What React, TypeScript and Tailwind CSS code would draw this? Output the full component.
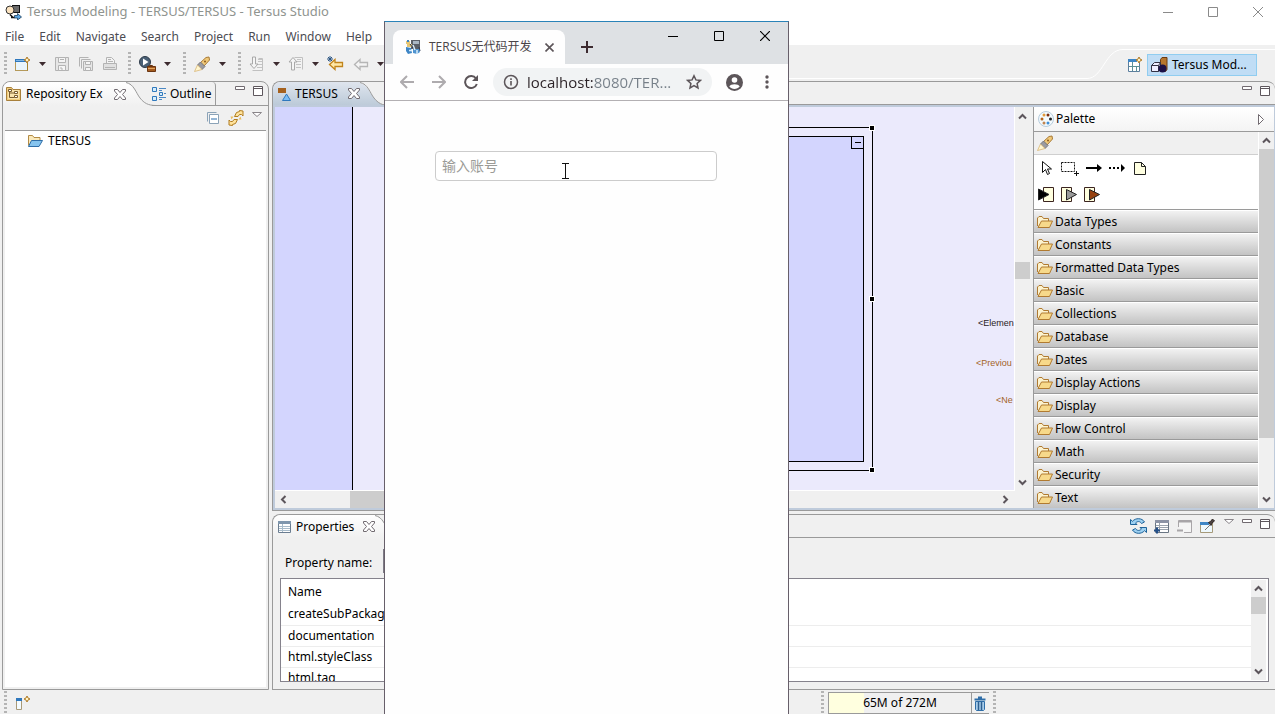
import React from 'react';
import clsx from 'clsx';

type IconProps = { className?: string };

const Svg: React.FC<{ w?: number; h?: number; className?: string; children: React.ReactNode }> = ({
  w = 16,
  h = 16,
  className,
  children,
}) => (
  <svg width={w} height={h} viewBox={`0 0 ${w} ${h}`} fill="none" aria-hidden="true" className={clsx('shrink-0', className)}>
    {children}
  </svg>
);

const AppIcon = () => (
  <Svg w={17}>
    <rect x="7.500" y="1.500" width="7" height="7" fill="#6b6b6b" stroke="#111" />
    <circle cx="5" cy="6" r="4" fill="#fbe3c0" stroke="#333" />
    <path d="M5 10.500l3 3h2M6 13.500h3" stroke="#111" strokeWidth="1.500" />
    <path d="M9.500 11.500h3v-2l4 3.500-4 3v-2h-3z" fill="#5aa5e2" stroke="#1c3d5c" strokeWidth=".8" />
  </Svg>
);

const Caret = () => (
  <Svg w={7} h={4}>
    <path d="M0 0h7L3.500 4z" fill="#3d2b30" />
  </Svg>
);

const Sparkle = ({ x = 11, y = 0 }: { x?: number; y?: number }) => (
  <path
    transform={`translate(${x} ${y})`}
    d="M3 0l1 2 2 1-2 1-1 2-1-2-2-1 2-1z"
    fill="#fff3c4"
    stroke="#b07a24"
    strokeWidth="1"
  />
);

const NewIcon = () => (
  <Svg>
    <rect x=".5" y="3.500" width="12" height="11" fill="#e9f5fc" stroke="#b59a5b" />
    <path d="M0 3h11v3H0z" fill="#2f78bd" />
    <path d="M1 4h9v1H1z" fill="#7fb6e4" />
    <path d="M12.500 7v7.500" stroke="#a8842d" />
    <Sparkle x={9} y={1} />
  </Svg>
);

const SaveIcon = () => (
  <Svg>
    <path d="M1.500 1.500h13v13h-13z" fill="#e6e6e6" stroke="#b3b3b3" />
    <path d="M4.500 1.500h7v5h-7zM4.500 9.500h7v5h-7z" fill="#f5f5f5" stroke="#b3b3b3" />
    <path d="M6 3.500h4M6 12h2v2" stroke="#b3b3b3" />
  </Svg>
);

const SaveAllIcon = () => (
  <Svg>
    <path d="M1.500 10.500v-9h9M3.500 12.500v-9h9" stroke="#b3b3b3" />
    <path d="M5.500 5.500h9v9h-9z" fill="#e6e6e6" stroke="#b3b3b3" />
    <path d="M7.500 5.500h5v3h-5zM7.500 11.500h5v3h-5z" fill="#f5f5f5" stroke="#b3b3b3" />
  </Svg>
);

const PrintIcon = () => (
  <Svg>
    <path d="M4.500 7.500v-6h5l3 3v3" fill="#f3f3f3" stroke="#b3b3b3" />
    <path d="M1.500 7.500h13v6h-13z" fill="#e0e0e0" stroke="#b3b3b3" />
    <path d="M6 3.500h3M6 5.500h5M3 11.500h10" stroke="#b3b3b3" />
  </Svg>
);

const RunIcon = () => (
  <Svg w={17}>
    <circle cx="6" cy="6" r="5.500" fill="#4a6076" stroke="#2c3a48" />
    <path d="M4 2.500l5.500 3.500L4 9.500z" fill="#fff" />
    <path d="M10.500 10.500v-1h3v1" stroke="#6b3511" />
    <path d="M8.500 10.500h8v5h-8z" fill="#a35a1d" stroke="#6b3511" />
    <path d="M9 12.500h7" stroke="#e3a45c" />
  </Svg>
);

const TorchIcon = () => (
  <Svg w={17}>
    <path d="M6 7l6-5.500 3-.5.500 3-5.500 6z" fill="#f0c878" stroke="#a97a35" />
    <path d="M3.500 9l3-3 4.500 4.500-3 3z" fill="#9a9aa0" stroke="#77777d" />
    <path d="M3.500 9l4.500 4.500L.5 15.500z" fill="#fff6d0" stroke="#d8b575" strokeWidth=".8" />
    <circle cx="11" cy="5.500" r="1" fill="#8a5a1c" />
  </Svg>
);

const StepIcon = ({ up }: { up?: boolean }) => (
  <Svg>
    <path d={up ? 'M6.500 1.500h8v12' : 'M3.500 14.500h10v-12h-4'} fill="#f3f3f3" stroke="#c0c0c0" />
    <path d="M8 11.500h5M8 8.500h5M9 5.500h4M9 3.500h4" stroke="#c4c4c4" />
    {up ? (
      <path d="M5 1.500l4 4.500H6.500v8h-3V6H1z" fill="#f5f5f5" stroke="#a9a9a9" />
    ) : (
      <path d="M5 12.500L1 8h2.500V1h3v7H9z" fill="#f5f5f5" stroke="#a9a9a9" />
    )}
  </Svg>
);

const BackIcon = ({ star }: { star?: boolean }) => (
  <Svg w={17}>
    <path
      d="M2.500 8.500l5.500-5v3h7.500v4H8v3z"
      fill={star ? '#ffe8a8' : '#f4f4f4'}
      stroke={star ? '#c1841c' : '#b5b5b5'}
      strokeWidth="1.300"
    />
    {star && <path d="M3 0v6M0 3h6M1 1l4 4M5 1L1 5" stroke="#2d5683" />}
  </Svg>
);

const OpenPerspectiveIcon = () => (
  <Svg>
    <path d="M1.500 2.500h11v12h-11z" fill="#fff" stroke="#5c7f9e" />
    <path d="M1 2h9v3H1z" fill="#3e86c6" />
    <path d="M5.500 5v9M2 9.500h11M9.500 9.500v5" stroke="#5c9096" />
    <Sparkle x={9} y={0} />
  </Svg>
);

const PerspectiveIcon = () => (
  <Svg w={17}>
    <path d="M9.500 2.500l1.500-2h5v12l-1.500 2h-5z" fill="#b5762e" stroke="#6a3b12" />
    <path d="M.5 8.500l3-3h6v6l-2 3h-7z" fill="#eef" stroke="#334" />
    <path d="M.5 8.500h7v6M7.500 8.500l2-3" stroke="#334" />
    <circle cx="11.500" cy="11.500" r="4" fill="#1c1147" />
  </Svg>
);

const RepositoryIcon = () => (
  <Svg>
    <path d="M.5 14.500v-13h5l1.500 2h7.500v11z" fill="#f2cd7c" stroke="#a8803c" />
    <path d="M2 4h11v9H2z" fill="#f9e3ad" />
    <path d="M3.500 4v7.500h5M3.500 7h5" stroke="#7a5c2e" />
    <path d="M2.500 3.500h3v2h-3zM8.500 5.500h3v2h-3zM8.500 9.500h3v2h-3z" fill="#fff" stroke="#7a5c2e" />
  </Svg>
);

const OutlineIcon = () => (
  <Svg w={14}>
    <path d="M.5 1.500h4v4h-4zM.5 10.500h4v4h-4zM7.500 6.500h3v3h-3z" fill="#d5edfb" stroke="#2f78bd" />
    <path d="M7 2.500h7M7 4.500h3M12 7.500h2M7 11.500h7M7 13.500h3" stroke="#4a88c4" />
  </Svg>
);

const CloseIcon = () => (
  <Svg w={12} h={11}>
    <path
      d="M.5.500h3L6 3.500 8.500.5h3v1.500L8.500 5.500l3 3.500v1.500h-3L6 7.500l-2.500 3h-3V9l3-3.500-3-3.500z"
      fill="#fff"
      stroke="#716a70"
    />
  </Svg>
);

const MinimizeIcon = () => (
  <Svg w={10} h={4}>
    <path d="M.5.500h9v3h-9z" fill="#fff" stroke="#716a70" />
  </Svg>
);

const MaximizeIcon = () => (
  <Svg w={10} h={10}>
    <path d="M.5.500h9v9h-9zM0 2.500h10" fill="#fff" stroke="#5e575d" />
  </Svg>
);

const ViewMenuIcon = () => (
  <Svg w={10} h={5}>
    <path d="M.5.500h9L5 4.500z" fill="#fff" stroke="#8a858a" />
  </Svg>
);

const CollapseIcon = () => (
  <Svg w={14} h={14}>
    <path d="M1.500 10.500v-9h9" stroke="#8ba3b8" />
    <path d="M3.500 3.500h9v9h-9z" fill="#fff" stroke="#8ba3b8" />
    <path d="M5 8h6" stroke="#2a6cab" />
  </Svg>
);

const LinkIcon = () => (
  <Svg>
    <path d="M6.500 6.500l2-4 3-1V.500l3.500.500v5l-1.500-1.500h-2L10 6.500z" fill="#ffe39c" stroke="#b17d20" />
    <path d="M9.500 9.500l-2 4-3 1v1L1 15v-5l1.500 1.500h2L6 9.500z" fill="#ffe39c" stroke="#b17d20" />
    <path d="M12.500 6.500l-2 3h3zM3.500 9.500l2-3h-3z" fill="#e9bd5c" />
  </Svg>
);

const ProjectIcon = () => (
  <Svg>
    <path d="M1.500 12.500v-10h4l1.500 2h6v3" fill="#fae9bb" stroke="#b38b45" />
    <path d="M1.500 13.500l3-6h11l-3.500 6z" fill="#86c4ee" stroke="#2f6ea8" />
  </Svg>
);

const ModelIcon = () => (
  <Svg w={13} h={14}>
    <path d="M0 1h8v5H0z" fill="#a5611e" />
    <path d="M8.500 7l4 6.500h-8z" fill="#7dbcf3" stroke="#2e78bd" />
  </Svg>
);

const PaletteIcon = () => (
  <Svg>
    <circle cx="8" cy="8" r="7.500" fill="#f4fafd" stroke="#b5cbdc" />
    <circle cx="4" cy="8" r="1.500" fill="#b5641a" />
    <circle cx="6" cy="4" r="1.500" fill="#e29a3a" />
    <circle cx="10" cy="4" r="1.500" fill="#7a2f12" />
    <circle cx="12.500" cy="8" r="1.500" fill="#222" />
    <circle cx="6" cy="12" r="1.500" fill="#c08550" />
    <circle cx="10" cy="12" r="1.500" fill="#3d8fd6" />
  </Svg>
);

const FolderIcon = () => (
  <Svg h={12}>
    <path d="M.5 10V2L2 .5h3L6.500 2.500h5V5" fill="#fcf3cf" stroke="#b07a30" />
    <path d="M1 11.500L4.500 5h11l-3 6.500z" fill="#f7d98a" stroke="#b07a30" />
  </Svg>
);

const PropertiesIcon = () => (
  <Svg w={13} h={12}>
    <path d="M.5.500h12v11H.5z" fill="#fff" stroke="#6a7d91" />
    <path d="M0 0h13v3H0z" fill="#7f96ad" />
    <path d="M1 5.500h11M1 7.500h11M1 9.500h11M4.500 3v8" stroke="#a9bccb" />
  </Svg>
);

const RefreshIcon = () => (
  <Svg w={17}>
    <path d="M.5 6.500V1.500l2 1.800C5.500-.3 12-.3 14.500 4l-3 1.500C10 3 7.500 3 5.500 5L7 6.500z" fill="#9ed1f2" stroke="#1f6399" />
    <path d="M16.500 9.500v5l-2-1.800C11.500 16.300 5 16.300 2.500 12l3-1.500c1.500 2.500 4 2.500 6 .5L10 9.500z" fill="#9ed1f2" stroke="#1f6399" />
  </Svg>
);

const TableAddIcon = () => (
  <Svg>
    <path d="M1.500 2.500h13v12h-13z" fill="#fff" stroke="#6a7684" />
    <path d="M1 2h14v3H1z" fill="#8c93a5" />
    <path d="M2 7.500h12M2 9.500h12M2 11.500h12M5.500 5v9" stroke="#9aa3ad" />
    <path d="M0 12.500h6M3 9.500v6" stroke="#244f87" strokeWidth="2" />
  </Svg>
);

const TableRemoveIcon = () => (
  <Svg>
    <path d="M1.500 9V2.500h13v12H7" fill="#f5f5f5" stroke="#a8a5a8" />
    <path d="M2 3.500h12M0 12.500h6" stroke="#a8a5a8" strokeWidth="2" />
  </Svg>
);

const PinIcon = () => (
  <Svg>
    <path d="M.5 4.500h12v10H.5z" fill="#eef8fd" stroke="#a69a7a" />
    <path d="M0 4h9v3H0z" fill="#3e86c6" />
    <path d="M5 12l5-5" stroke="#777" />
    <path d="M8.500 4.500l2-1 2-2.500 2 2-2.500 2-1 2.500z" fill="#4b4240" stroke="#2e2523" />
  </Svg>
);

const TrashIcon = () => (
  <Svg w={12} h={15}>
    <path d="M4 1.500h4M.5 3.500h11" stroke="#2f6ea8" strokeWidth="2" />
    <path d="M1.500 5.500h9v8l-1 1h-7l-1-1z" fill="#a9cdea" stroke="#2f6ea8" />
    <path d="M4.500 6v8M7.500 6v8" stroke="#2f5f8f" strokeWidth="1.500" />
  </Svg>
);

const FastViewIcon = () => (
  <Svg>
    <path d="M1.500 3.500h5v11h-5z" fill="#f4fbff" stroke="#a99a78" />
    <path d="M1 3h6v3H1z" fill="#2f78bd" />
    <Sparkle x={9} y={1} />
  </Svg>
);

const FaviconIcon = () => (
  <Svg>
    <path d="M6 1h9v9H6z" fill="#5a5f68" />
    <path d="M8 2h6v3H8z" fill="#aab7c4" />
    <path d="M1 2h4v3H1zM2 5h5v3H2z" fill="#e8c774" />
    <path d="M2 1h2v2H2z" fill="#3e86c6" />
    <path d="M1 8l5 1 1 5-4 1-2-3z" fill="#3e86c6" />
    <path d="M8 10h6l1 3-3 2-4-1z" fill="#4e93cf" />
    <path d="M4 11.500h3M8 6l2 5M12 11v4" stroke="#d9edfa" strokeWidth="1.500" />
    <path d="M5 5l3 4M14 8l1 4" stroke="#2c3a55" />
  </Svg>
);

const Chevron: React.FC<IconProps> = ({ className }) => (
  <Svg w={9} h={9} className={className}>
    <path d="M1 6.500l3.500-3.500L8 6.500" stroke="#5c555b" strokeWidth="2" />
  </Svg>
);

/* Slanted edge on the right of a selected tab */
const TabCurve = ({ fill }: { fill: string }) => (
  <svg width="38" height="24" viewBox="0 0 38 24" aria-hidden="true" className="-ml-2 shrink-0">
    <defs>
      <linearGradient id={`tab-${fill}`} x1="0" y1="0" x2="0" y2="1">
        <stop offset="0" stopColor={fill === 'editor' ? '#dfe5ee' : '#fff'} />
        <stop offset="1" stopColor={fill === 'editor' ? '#bccad8' : '#f0f0f0'} />
      </linearGradient>
    </defs>
    <path d="M0 0h2C15 0 17 10 22 16c4 5 8 7.500 16 7.500V24H0z" fill={`url(#tab-${fill})`} />
    <path d="M8 .5C16 2 18 11 22 16c4 5 8 7.500 16 7.500" fill="none" stroke="#9a9a9a" />
  </svg>
);

const Grip: React.FC<IconProps> = ({ className }) => (
  <div className={clsx('h-6 w-[3px] shrink-0 bg-[repeating-linear-gradient(#b4b4b4_0_2px,transparent_2px_4px)]', className)} />
);

const ToolButton: React.FC<{ label: string; children: React.ReactNode }> = ({ label, children }) => (
  <button type="button" aria-label={label} className="z-10 flex shrink-0 items-center justify-center">
    {children}
  </button>
);

const ViewControls = () => (
  <div className="flex items-start gap-2 pt-1 pr-[5px]">
    <ToolButton label="Minimize">
      <MinimizeIcon />
    </ToolButton>
    <ToolButton label="Maximize">
      <MaximizeIcon />
    </ToolButton>
  </div>
);

const menus = ['File', 'Edit', 'Navigate', 'Search', 'Project', 'Run', 'Window', 'Help'];

const TitleBar = () => (
  <header className="flex h-[23px] shrink-0 items-center bg-white pl-[5px]">
    <AppIcon />
    <h1 className="ml-[5px] flex-1 text-[13px] text-[#8f948f]">Tersus Modeling - TERSUS/TERSUS - Tersus Studio</h1>
    <div className="flex items-center gap-[35px] pr-3 text-[#8a8a8a]">
      <ToolButton label="Minimize window">
        <Svg w={10} h={10}>
          <path d="M0 5.500h10" stroke="currentColor" />
        </Svg>
      </ToolButton>
      <ToolButton label="Maximize window">
        <Svg w={10} h={10}>
          <path d="M.5.500h9v9h-9z" stroke="currentColor" />
        </Svg>
      </ToolButton>
      <ToolButton label="Close window">
        <Svg w={10} h={10}>
          <path d="M0 0l10 10M10 0L0 10" stroke="currentColor" />
        </Svg>
      </ToolButton>
    </div>
  </header>
);

const MenuBar = () => (
  <nav className="flex h-[22px] shrink-0 items-center gap-[15px] bg-white pt-2 pb-0.5 pl-[5px]">
    {menus.map((m) => (
      <button key={m} type="button" className="text-[#4c4c52]">
        {m}
      </button>
    ))}
  </nav>
);

const Toolbar = () => (
  <div className="flex h-9 shrink-0 justify-between bg-[#f0f0f0]">
    <div className="flex items-center gap-2 pt-0.5 pl-1">
      <Grip />
      <ToolButton label="New"><NewIcon /></ToolButton>
      <ToolButton label="New options"><Caret /></ToolButton>
      <ToolButton label="Save"><SaveIcon /></ToolButton>
      <ToolButton label="Save all"><SaveAllIcon /></ToolButton>
      <ToolButton label="Print"><PrintIcon /></ToolButton>
      <Grip className="ml-0.5" />
      <ToolButton label="Run"><RunIcon /></ToolButton>
      <ToolButton label="Run options"><Caret /></ToolButton>
      <Grip className="ml-1" />
      <ToolButton label="Search"><TorchIcon /></ToolButton>
      <ToolButton label="Search options"><Caret /></ToolButton>
      <Grip className="ml-1" />
      <ToolButton label="Next annotation"><StepIcon /></ToolButton>
      <ToolButton label="Next options"><Caret /></ToolButton>
      <ToolButton label="Previous annotation"><StepIcon up /></ToolButton>
      <ToolButton label="Previous options"><Caret /></ToolButton>
      <ToolButton label="Last edit"><BackIcon star /></ToolButton>
      <ToolButton label="Back"><BackIcon /></ToolButton>
      <ToolButton label="Back options"><Caret /></ToolButton>
    </div>
    <div className="mb-[2px] ml-4 flex-1 border-b border-white" />
    <div className="flex">
      <svg width="40" height="36" viewBox="0 0 40 36" fill="none" aria-hidden="true">
        <path d="M0 33.500h4C20 33.500 22 4.500 40 4.500" stroke="#fff" />
      </svg>
      <div className="mt-1 flex h-[30px] items-center gap-1 border-t border-white pr-[18px] pl-1">
        <ToolButton label="Open perspective"><OpenPerspectiveIcon /></ToolButton>
        <button type="button" className="flex h-[22px] items-center gap-1 border border-[#90cdf0] bg-[#c0ddf5] px-[3px] text-black">
          <PerspectiveIcon />
          <span className="w-[81px] text-left">Tersus Mod...</span>
        </button>
      </div>
    </div>
  </div>
);

const RepositoryView = () => (
  <section className="ml-[2px] flex w-[267px] shrink-0 flex-col rounded-t-lg border border-[#9a9a9a] bg-[#f0f0f0]">
    <div className="flex h-6">
      <div className="flex items-center gap-1 rounded-tl-lg bg-linear-to-b from-white to-[#f0f0f0] pl-[3px]">
        <RepositoryIcon />
        <span className="w-[84px] whitespace-nowrap">Repository Ex</span>
        <ToolButton label="Close Repository Explorer"><CloseIcon /></ToolButton>
      </div>
      <TabCurve fill="left" />
      <div className="-ml-1 flex flex-1 justify-between border-b border-[#9a9a9a]">
        <button type="button" className="flex items-center gap-1 rounded-tr border-r border-[#9a9a9a] pr-[3px]">
          <OutlineIcon />
          Outline
        </button>
        <ViewControls />
      </div>
    </div>
    <div className="mx-[2px] flex h-[25px] items-center justify-end gap-2 border-b border-[#9a9a9a] pr-1">
      <ToolButton label="Collapse all"><CollapseIcon /></ToolButton>
      <ToolButton label="Link with editor"><LinkIcon /></ToolButton>
      <div className="mb-2 flex"><ToolButton label="View menu"><ViewMenuIcon /></ToolButton></div>
    </div>
    <div className="mx-[2px] mb-[2px] flex-1 bg-white">
      <div className="flex h-5 items-center gap-[5px] pl-[22px]">
        <ProjectIcon />
        <span>TERSUS</span>
      </div>
    </div>
  </section>
);

const Handle = ({ className }: { className: string }) => (
  <div className={clsx('absolute size-1.5 border border-white bg-black', className)} />
);

const DiagramCanvas = () => (
  <div className="relative flex-1 overflow-hidden border-r border-b border-white bg-[#ebeafc] font-['Liberation_Sans'] text-[9px] leading-3">
    <div className="absolute inset-y-0 left-0 w-[78px] border-r border-black bg-[#d3d5fe]" />
    <div className="absolute top-[20px] left-[140px] h-[344px] w-[458px] border border-black" />
    <div className="absolute top-[29px] left-[150px] h-[326px] w-[439px] border border-black bg-[#d3d5fe]">
      <button type="button" aria-label="Collapse model" className="absolute -top-px -right-px flex size-[13px] items-center justify-center border border-black">
        <span className="h-px w-1.5 bg-black" />
      </button>
    </div>
    <Handle className="top-[18px] left-[594px]" />
    <Handle className="top-[189px] left-[594px]" />
    <Handle className="top-[360px] left-[594px]" />
    <span className="absolute top-[210px] left-[703px] text-[#2a1c24]">&lt;Elemen</span>
    <span className="absolute top-[250px] left-[701px] text-[#a36328]">&lt;Previou</span>
    <span className="absolute top-[287px] left-[721px] text-[#a36328]">&lt;Ne</span>
  </div>
);

const drawers = [
  'Data Types',
  'Constants',
  'Formatted Data Types',
  'Basic',
  'Collections',
  'Database',
  'Dates',
  'Display Actions',
  'Display',
  'Flow Control',
  'Math',
  'Security',
  'Text',
];

const Palette = () => (
  <aside className="ml-[3px] flex w-[241px] shrink-0 flex-col border-l border-[#9a9a9a] bg-[#f0f0f0]">
    <div className="flex h-[25px] shrink-0 items-center gap-0.5 border-b border-[#9a9a9a] bg-linear-to-b from-white to-[#f4f4f4] pl-1">
      <PaletteIcon />
      <span className="flex-1">Palette</span>
      <button type="button" aria-label="Hide palette" className="pr-2.5">
        <Svg w={6} h={11}>
          <path d="M.5.500v10l5-5z" fill="#fff" stroke="#716a70" />
        </Svg>
      </button>
    </div>
    <div className="flex min-h-0 flex-1">
      <div className="flex-1 overflow-hidden">
        <div className="flex h-[23px] items-center border-b border-[#cfcfcf] pl-[3px]">
          <TorchIcon />
        </div>
        <div className="flex h-[55px] flex-col gap-[11px] border-b border-[#9a9a9a] bg-white pt-[5px] pl-1">
          <div className="flex items-center gap-[7px]">
            <ToolButton label="Select">
              <Svg>
                <path d="M4.500 1.500v11l3-3 2 5 2-1-2-4.500h4z" fill="#fff" stroke="#111" />
              </Svg>
            </ToolButton>
            <ToolButton label="Marquee">
              <Svg w={18}>
                <path d="M.5 2.500h13v9H.5z" stroke="#111" strokeDasharray="2 1" />
                <path d="M13 13.500h5M15.500 11v5" stroke="#111" />
              </Svg>
            </ToolButton>
            <ToolButton label="Flow">
              <Svg>
                <path d="M0 8h12" stroke="#000" strokeWidth="2" />
                <path d="M11 4l5 4-5 4z" fill="#000" />
              </Svg>
            </ToolButton>
            <ToolButton label="Dashed flow">
              <Svg>
                <path d="M0 8h12" stroke="#000" strokeWidth="2" strokeDasharray="2 2" />
                <path d="M12 4l4 4-4 4z" fill="#000" />
              </Svg>
            </ToolButton>
            <ToolButton label="Note">
              <Svg>
                <path d="M2.500 2.500h7l4 4v8h-11z" fill="#ffffe1" stroke="#222" />
                <path d="M9.500 2.500v4h4" stroke="#222" />
              </Svg>
            </ToolButton>
          </div>
          <div className="flex items-center gap-[7px]">
            {['#000', '#9a9a9a', '#96400f'].map((color, i) => (
              <ToolButton key={color} label={`Trigger ${i + 1}`}>
                <Svg>
                  <path d={i === 0 ? 'M5.500.500h10v14h-10z' : 'M.5.500h10v14H.5z'} fill="#ffffdf" stroke="#3b2420" />
                  <path d={i === 0 ? 'M.5 2v11L11 7.500z' : 'M5.500 2.500v10.500l10-5.500z'} fill={color} stroke="#222" />
                </Svg>
              </ToolButton>
            ))}
          </div>
        </div>
        {drawers.map((name) => (
          <button
            key={name}
            type="button"
            className="flex h-[23px] w-full items-center gap-0.5 border-t border-b border-t-white border-b-[#9a9a9a] bg-linear-to-b from-[#f2f2f2] to-[#c3c3c3] pl-[3px] text-left"
          >
            <FolderIcon />
            {name}
          </button>
        ))}
      </div>
      <div className="flex w-4 shrink-0 flex-col items-center border-l border-white">
        <div className="flex h-[17px] items-center"><Chevron /></div>
        <div className="h-[289px] w-full bg-[#cdcdcd]" />
        <div className="flex flex-1 items-end pb-1"><Chevron className="rotate-180" /></div>
      </div>
    </div>
  </aside>
);

const Editor = () => (
  <section className="flex h-[430px] shrink-0 flex-col rounded-tl-lg rounded-tr-lg border border-r-0 border-[#9a9a9a] bg-[#f0f0f0]">
    <div className="flex h-[23px]">
      <div className="flex items-center gap-1 rounded-tl-lg bg-linear-to-b from-[#dfe5ee] to-[#bccad8] pl-[5px]">
        <ModelIcon />
        <span className="w-[49px]">TERSUS</span>
        <ToolButton label="Close TERSUS"><CloseIcon /></ToolButton>
      </div>
      <TabCurve fill="editor" />
      <div className="flex flex-1 justify-end border-b border-[#9a9a9a]">
        <ViewControls />
      </div>
    </div>
    <div className="flex min-h-0 flex-1 border-2 border-r-1 border-[#bfcbdb] bg-[#f0f0f0]">
      <div className="flex flex-1 flex-col">
        <div className="flex min-h-0 flex-1">
          <DiagramCanvas />
          <div className="flex w-[15px] flex-col items-center">
            <div className="flex h-[18px] items-center"><Chevron /></div>
            <div className="mt-[137px] h-[17px] w-full bg-[#cdcdcd]" />
            <div className="flex flex-1 items-end pb-1"><Chevron className="rotate-180" /></div>
          </div>
        </div>
        <div className="flex h-[17px] shrink-0 items-center justify-between pr-5 pl-1">
          <Chevron className="-rotate-90" />
          <div className="ml-[62px] h-full w-[300px] bg-[#cdcdcd]" />
          <div className="flex-1" />
          <Chevron className="rotate-90" />
        </div>
      </div>
      <Palette />
    </div>
  </section>
);

const properties = ['createSubPackage', 'documentation', 'html.styleClass', 'html.tag'];

const PropertiesView = () => (
  <section className="mt-[3px] flex min-h-0 flex-1 flex-col rounded-t-lg border border-r-0 border-[#9a9a9a] bg-[#f0f0f0]">
    <div className="flex h-[23px] shrink-0">
      <div className="flex items-center gap-[5px] rounded-tl-lg bg-linear-to-b from-white to-[#f0f0f0] pl-[5px]">
        <PropertiesIcon />
        <span className="w-[62px]">Properties</span>
        <ToolButton label="Close Properties"><CloseIcon /></ToolButton>
      </div>
      <TabCurve fill="props" />
      <div className="flex flex-1 justify-end gap-2 border-b border-[#9a9a9a]">
        <div className="flex items-center gap-[7px]">
          <ToolButton label="Refresh"><RefreshIcon /></ToolButton>
          <ToolButton label="Add property"><TableAddIcon /></ToolButton>
          <ToolButton label="Remove property"><TableRemoveIcon /></ToolButton>
          <ToolButton label="Pin"><PinIcon /></ToolButton>
        </div>
        <div className="flex items-start pt-1"><ToolButton label="View menu"><ViewMenuIcon /></ToolButton></div>
        <ViewControls />
      </div>
    </div>
    <div className="flex h-10 shrink-0 items-end gap-2 px-3 pb-[5px]">
      <label htmlFor="property-name" className="mb-0.5 w-[90px] whitespace-nowrap">Property name:</label>
      <input id="property-name" type="text" className="h-6 w-[300px] border border-[#7d7a85] bg-white px-1" />
    </div>
    <div className="mr-1.5 mb-[7px] ml-[7px] flex min-h-0 flex-1 border border-[#85828c] bg-white">
      <div className="flex-1 overflow-hidden">
        <table className="w-full">
          <thead>
            <tr>
              <th className="h-[25px] pl-[7px] text-left font-normal">Name</th>
            </tr>
          </thead>
          <tbody>
            {properties.map((name) => (
              <tr key={name} className="border-b border-[#ededed]">
                <td className="h-[21px] pl-[7px]">{name}</td>
              </tr>
            ))}
          </tbody>
        </table>
      </div>
      <div className="my-px mr-[2px] flex w-[15px] flex-col items-center bg-[#f0f0f0]">
        <div className="flex h-[17px] items-center"><Chevron /></div>
        <div className="h-[17px] w-full bg-[#cdcdcd]" />
        <div className="flex flex-1 items-end pb-1"><Chevron className="rotate-180" /></div>
      </div>
    </div>
  </section>
);

const StatusBar = () => (
  <footer className="flex h-6 shrink-0 items-center justify-between bg-[#f0f0f0] pt-0.5 pl-1">
    <div className="flex items-center gap-2">
      <Grip />
      <ToolButton label="Show view as fast view"><FastViewIcon /></ToolButton>
    </div>
    <div className="flex h-[22px] items-center gap-1 pr-[279px]">
      <Grip />
      <div className="flex h-[22px] items-center border border-r-0 border-[#9a9a9a]">
        <div className="flex h-5 w-[143px] items-center justify-center border-r border-[#9a9a9a] bg-linear-to-r from-[#ffffdf] from-25% to-[#f0f0f0] to-25%">
          65M of 272M
        </div>
        <button type="button" aria-label="Run garbage collector" className="pr-[3px] pl-0.5">
          <TrashIcon />
        </button>
      </div>
      <Grip />
    </div>
  </footer>
);

const BrowserWindow = () => (
  <div className="absolute top-[21px] bottom-0 left-[384px] z-20 flex w-[405px] flex-col border-x border-t border-x-[#675f6a] border-t-[#2a83b8] bg-[#fefefe] font-['Open_Sans','Noto_Sans_CJK_SC',sans-serif]">
    <div className="flex h-[42px] shrink-0 bg-[#dee1e4] pl-2">
      <div className="mt-2 flex w-[172px] items-center gap-2 rounded-t-lg bg-[#fefefe] pl-3 text-xs text-[#4a4448]">
        <FaviconIcon />
        <span className="w-[104px] whitespace-nowrap">TERSUS无代码开发</span>
        <button type="button" aria-label="Close tab" className="pl-1">
          <Svg w={9} h={9}>
            <path d="M.5.500l8 8M8.500.5l-8 8" stroke="#5c5559" strokeWidth="1.600" />
          </Svg>
        </button>
      </div>
      <button type="button" aria-label="New tab" className="mt-2 ml-4">
        <Svg w={12} h={12}>
          <path d="M6 0v12M0 6h12" stroke="#3d2b30" strokeWidth="2" />
        </Svg>
      </button>
      <div className="flex flex-1 items-start justify-end gap-9 pt-[9px] pr-[18px] text-black">
        <ToolButton label="Minimize browser">
          <Svg w={10} h={10}>
            <path d="M0 5.500h10" stroke="currentColor" />
          </Svg>
        </ToolButton>
        <ToolButton label="Maximize browser">
          <Svg w={10} h={10}>
            <path d="M.5.500h9v9h-9z" stroke="currentColor" />
          </Svg>
        </ToolButton>
        <ToolButton label="Close browser">
          <Svg w={10} h={10}>
            <path d="M0 0l10 10M10 0L0 10" stroke="currentColor" strokeWidth="1.200" />
          </Svg>
        </ToolButton>
      </div>
    </div>
    <div className="flex h-[37px] shrink-0 items-center border-b border-[#b3b0b3] pr-[19px] pl-[15px]">
      <div className="flex gap-[18px]">
        <ToolButton label="Go back">
          <Svg w={14} h={14}>
            <path d="M14 7H1.500M7 1L1 7l6 6" stroke="#aeabae" strokeWidth="2" />
          </Svg>
        </ToolButton>
        <ToolButton label="Go forward">
          <Svg w={14} h={14}>
            <path d="M0 7h12.500M7 1l6 6-6 6" stroke="#aeabae" strokeWidth="2" />
          </Svg>
        </ToolButton>
        <ToolButton label="Reload">
          <Svg w={14} h={14}>
            <path d="M12 3.500A6 6 0 1 0 12.800 9" stroke="#5c5559" strokeWidth="2" />
            <path d="M14 0v6H8z" fill="#5c5559" />
          </Svg>
        </ToolButton>
      </div>
      <div className="ml-[15px] flex h-7 flex-1 items-center gap-2 rounded-full bg-[#f1f3f4] px-2.5">
        <Svg>
          <circle cx="8" cy="8" r="6.500" stroke="#5c5559" strokeWidth="1.500" />
          <path d="M8 7v4.500M8 4.300v1.600" stroke="#5c5559" strokeWidth="1.600" />
        </Svg>
        <input
          type="text"
          aria-label="Address"
          defaultValue="localhost:8080/TER..."
          className="w-0 flex-1 bg-linear-to-r from-[#2b2227] from-[66px] to-[#767f88] to-[66px] bg-clip-text text-[15px] text-transparent outline-none"
        />
        <ToolButton label="Bookmark">
          <Svg>
            <path d="M8 1.800l1.900 4.100 4.500.5-3.300 3.100.9 4.500-4-2.300-4 2.300.9-4.500L1.600 6.400l4.500-.5z" stroke="#5c5559" strokeWidth="1.500" />
          </Svg>
        </ToolButton>
      </div>
      <button type="button" aria-label="Profile" className="ml-3.5">
        <Svg w={17} h={17}>
          <circle cx="8.500" cy="8.500" r="8.500" fill="#5c5559" />
          <circle cx="8.500" cy="6" r="2.800" fill="#fff" />
          <path d="M3.300 12.500c1.500-3 9-3 10.400 0-2.500 3.300-8 3.300-10.400 0z" fill="#fff" />
        </Svg>
      </button>
      <button type="button" aria-label="Browser menu" className="ml-[22px]">
        <Svg w={4} h={14}>
          <circle cx="2" cy="2" r="1.700" fill="#5c5559" />
          <circle cx="2" cy="7" r="1.700" fill="#5c5559" />
          <circle cx="2" cy="12" r="1.700" fill="#5c5559" />
        </Svg>
      </button>
    </div>
    <form className="relative mt-[50px] mr-[71px] ml-[50px]">
      <input
        type="text"
        aria-label="输入账号"
        placeholder="输入账号"
        className="block h-[30px] w-full rounded border border-[#ccc] bg-white px-1.5 pb-0.5 text-sm placeholder:text-[#9b9b97] outline-none"
      />
      {/* text cursor */}
      <Svg w={7} h={16} className="absolute top-3 left-[127px]">
        <path d="M0 .5h7M0 15.500h7M3.500 0v16" stroke="#111" />
      </Svg>
    </form>
  </div>
);

const App: React.FC = () => {
  return (
    <div className="relative flex h-screen flex-col overflow-hidden bg-[#f0f0f0] font-['Noto_Sans','Noto_Sans_CJK_SC',sans-serif] text-xs text-black">
      <TitleBar />
      <MenuBar />
      <Toolbar />
      <main className="flex min-h-0 flex-1 gap-[3px]">
        <RepositoryView />
        <div className="flex min-w-0 flex-1 flex-col">
          <Editor />
          <PropertiesView />
        </div>
      </main>
      <StatusBar />
      <BrowserWindow />
    </div>
  );
};

export default App;
